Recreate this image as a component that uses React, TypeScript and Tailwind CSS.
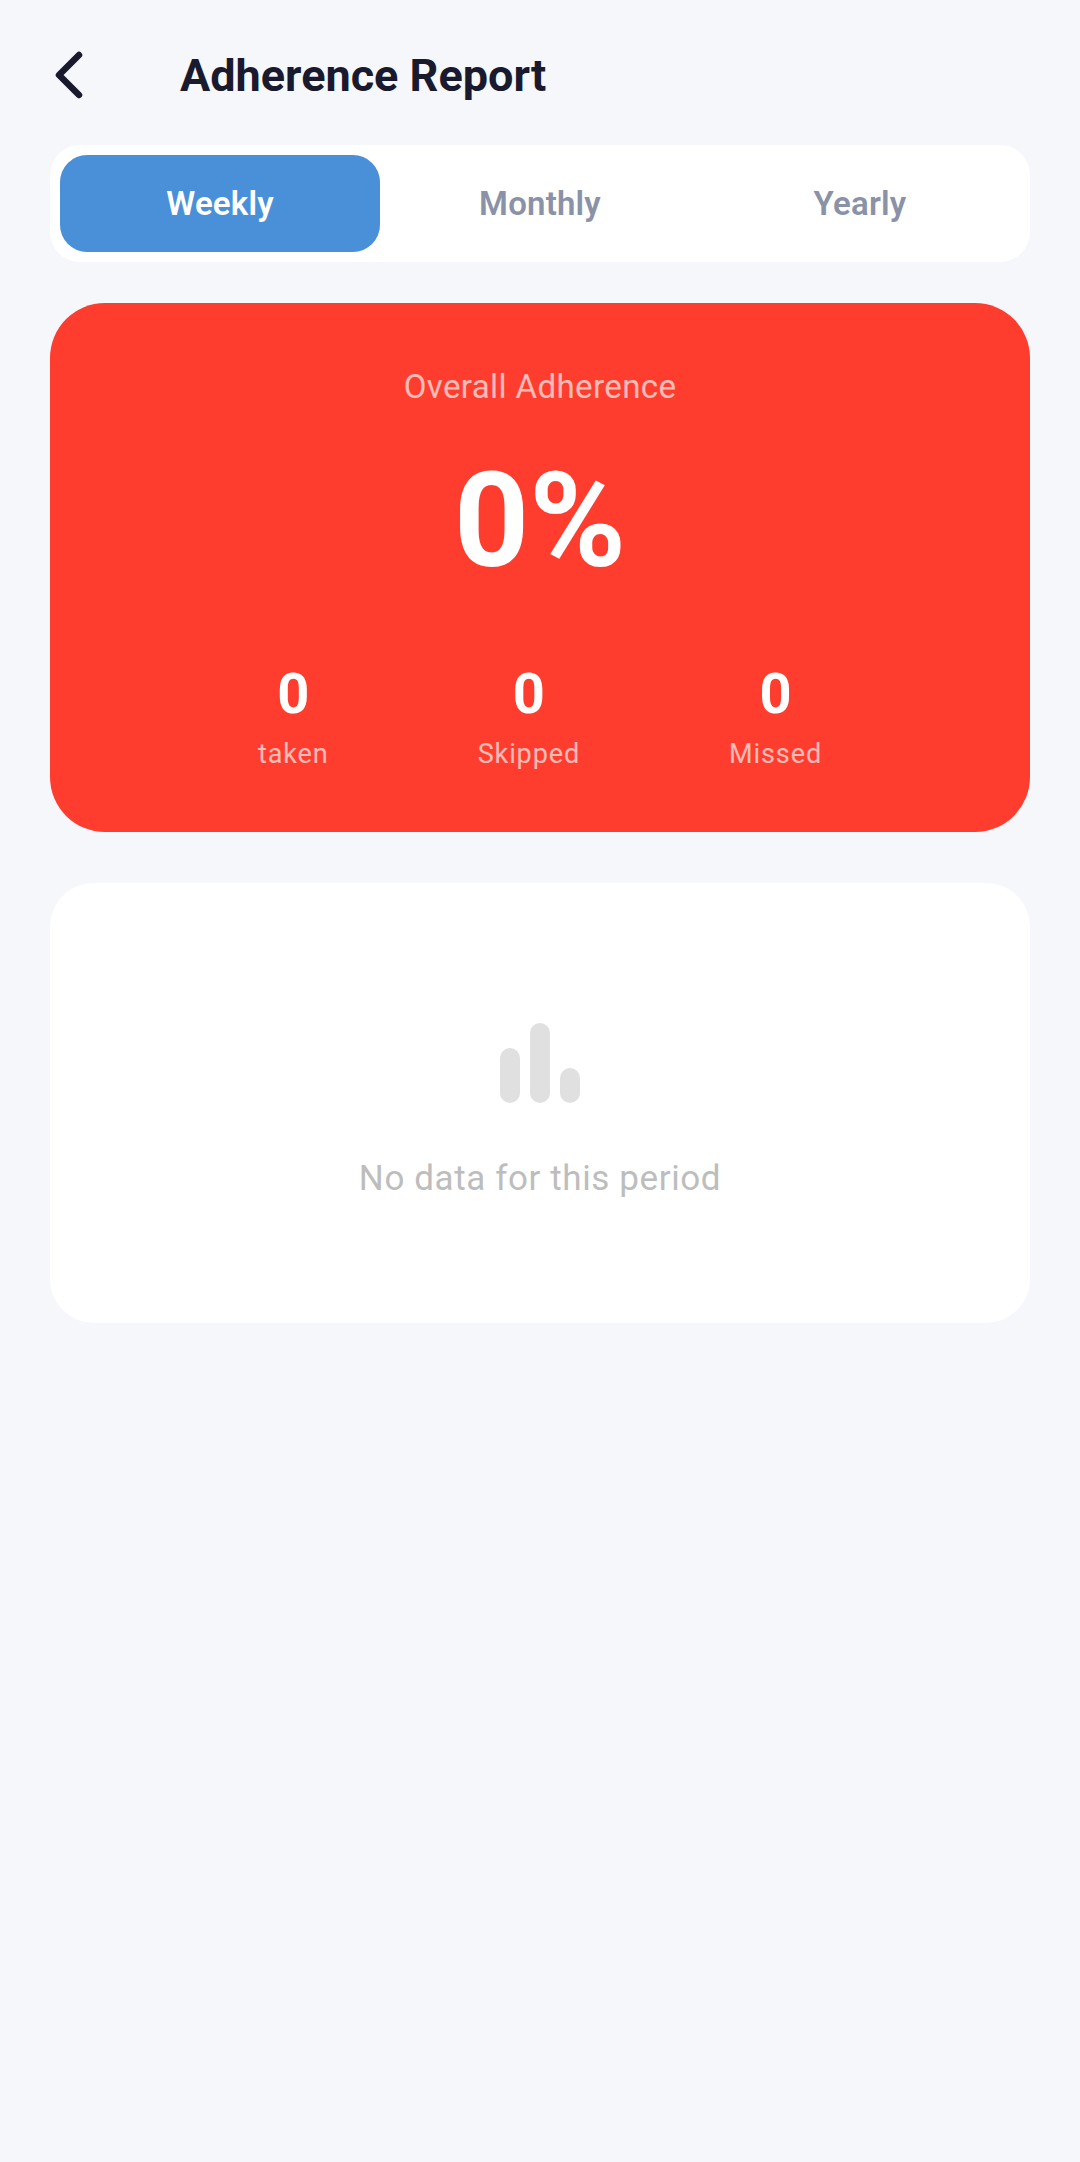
import React from "react";

const tabs = ["Weekly", "Monthly", "Yearly"];
const stats = ["taken", "Skipped", "Missed"];

export default function App() {
  return (
    <div className="min-h-[2162px] w-[1080px] bg-[#f5f7fb] px-[50px] font-['Roboto',sans-serif]">
      <header className="flex h-[145px] items-center pt-[5px]">
        <svg width="40" height="56" viewBox="0 0 40 56" fill="none" className="ml-[3px]">
          <path d="M26 8 L6 28 L26 48" stroke="#1a1a2e" strokeWidth="6.5" strokeLinecap="round" strokeLinejoin="round" />
        </svg>
        <h1 className="mt-[2px] ml-[87px] text-[45px] leading-[52px] font-bold text-[#1a1a2e]">Adherence Report</h1>
      </header>

      <div className="flex h-[117px] rounded-[30px] bg-white p-[10px]">
        {tabs.map((t, i) => (
          <div
            key={t}
            className={
              i === 0
                ? "flex flex-1 items-center justify-center rounded-[27px] bg-[#4a90d9] text-[33px] font-semibold tracking-[0.2px] text-white"
                : "flex flex-1 items-center justify-center text-[33px] font-semibold tracking-[0.2px] text-[#8a92a8]"
            }
          >
            {t}
          </div>
        ))}
      </div>

      <section className="mt-[41px] flex h-[529px] flex-col items-center rounded-[55px] bg-[#ff3d2e] pt-[66px]">
        <p className="text-[33px] leading-[36px] tracking-[0.4px] text-white/65">Overall Adherence</p>
        <p className="mt-[39px] text-[131px] leading-[154px] font-bold text-white">0%</p>
        <div className="mt-[62px] flex justify-center gap-[149px]">
          {stats.map((s) => (
            <div key={s} className="flex flex-col items-center">
              <span className="text-[56px] leading-[68px] font-bold text-white">0</span>
              <span className="mt-[10px] text-[27px] leading-[32px] tracking-[0.9px] text-white/65">{s}</span>
            </div>
          ))}
        </div>
      </section>

      <section className="mt-[51px] flex h-[440px] flex-col items-center rounded-[44px] bg-white pt-[140px]">
        <div className="flex h-[80px] items-end gap-[10px]">
          <div className="h-[55px] w-[20px] rounded-[10px] bg-[#e0e0e0]" />
          <div className="h-[80px] w-[20px] rounded-[10px] bg-[#e0e0e0]" />
          <div className="h-[35px] w-[20px] rounded-[10px] bg-[#e0e0e0]" />
        </div>
        <p className="mt-[55px] text-[35px] leading-[42px] tracking-[0.6px] text-[#bdbdbd]">No data for this period</p>
      </section>
    </div>
  );
}
